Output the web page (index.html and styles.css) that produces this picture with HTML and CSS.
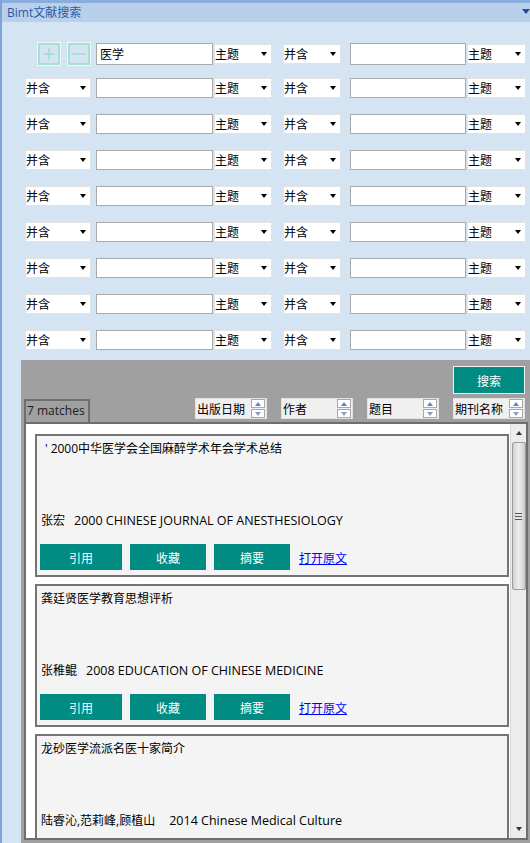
FILE: index.html
```html
<!DOCTYPE html>
<html lang="zh-CN">
<head>
<meta charset="utf-8">
<title>Bimt文献搜索</title>
<link rel="stylesheet" href="styles.css">
</head>
<body>
<div class="window">
  <div class="titlebar">
    <span class="title">Bimt文献搜索</span>
    <span class="tb-arrow"></span>
  </div>

  <div class="form">
    <div class="row first">
      <div class="c1 pm">
        <span class="pmbtn"><svg width="18" height="18" viewBox="0 0 18 18"><path d="M3.5 9H14.5M9 3.5V14.5" stroke="#a4e1d1" stroke-width="2" fill="none"/></svg></span>
        <span class="pmbtn"><svg width="18" height="18" viewBox="0 0 18 18"><path d="M2.5 9H15.5" stroke="#a4e1d1" stroke-width="2" fill="none"/></svg></span>
      </div>
      <div class="inp c2">医学</div>
      <div class="sel c3">主题</div>
      <div class="sel c4">并含</div>
      <div class="inp c5"></div>
      <div class="sel c6">主题</div>
    </div>
    <div class="row"><div class="sel c1">并含</div><div class="inp c2"></div><div class="sel c3">主题</div><div class="sel c4">并含</div><div class="inp c5"></div><div class="sel c6">主题</div></div>
    <div class="row"><div class="sel c1">并含</div><div class="inp c2"></div><div class="sel c3">主题</div><div class="sel c4">并含</div><div class="inp c5"></div><div class="sel c6">主题</div></div>
    <div class="row"><div class="sel c1">并含</div><div class="inp c2"></div><div class="sel c3">主题</div><div class="sel c4">并含</div><div class="inp c5"></div><div class="sel c6">主题</div></div>
    <div class="row"><div class="sel c1">并含</div><div class="inp c2"></div><div class="sel c3">主题</div><div class="sel c4">并含</div><div class="inp c5"></div><div class="sel c6">主题</div></div>
    <div class="row"><div class="sel c1">并含</div><div class="inp c2"></div><div class="sel c3">主题</div><div class="sel c4">并含</div><div class="inp c5"></div><div class="sel c6">主题</div></div>
    <div class="row"><div class="sel c1">并含</div><div class="inp c2"></div><div class="sel c3">主题</div><div class="sel c4">并含</div><div class="inp c5"></div><div class="sel c6">主题</div></div>
    <div class="row"><div class="sel c1">并含</div><div class="inp c2"></div><div class="sel c3">主题</div><div class="sel c4">并含</div><div class="inp c5"></div><div class="sel c6">主题</div></div>
    <div class="row"><div class="sel c1">并含</div><div class="inp c2"></div><div class="sel c3">主题</div><div class="sel c4">并含</div><div class="inp c5"></div><div class="sel c6">主题</div></div>
  </div>

  <div class="panel">
    <div class="search-row"><button class="search">搜索</button></div>
    <div class="sort-row">
      <div class="tab">7 matches</div>
      <div class="sorts">
        <div class="sort"><span>出版日期</span><span class="spin"><i class="up"></i><i class="dn"></i></span></div>
        <div class="sort"><span>作者</span><span class="spin"><i class="up"></i><i class="dn"></i></span></div>
        <div class="sort"><span>题目</span><span class="spin"><i class="up"></i><i class="dn"></i></span></div>
        <div class="sort"><span>期刊名称</span><span class="spin"><i class="up"></i><i class="dn"></i></span></div>
      </div>
    </div>
    <div class="list">
      <div class="cards">
        <div class="card">
          <div class="ctitle"><span class="quote">'</span>2000中华医学会全国麻醉学术年会学术总结</div>
          <div class="meta"><span>张宏</span><span class="src">2000 CHINESE JOURNAL OF ANESTHESIOLOGY</span></div>
          <div class="actions"><button class="btn wide">引用</button><button class="btn">收藏</button><button class="btn">摘要</button><a class="open" href="#">打开原文</a></div>
        </div>
        <div class="card">
          <div class="ctitle">龚廷贤医学教育思想评析</div>
          <div class="meta"><span>张稚鲲</span><span class="src">2008 EDUCATION OF CHINESE MEDICINE</span></div>
          <div class="actions"><button class="btn wide">引用</button><button class="btn">收藏</button><button class="btn">摘要</button><a class="open" href="#">打开原文</a></div>
        </div>
        <div class="card">
          <div class="ctitle">龙砂医学流派名医十家简介</div>
          <div class="meta"><span>陆睿沁,范莉峰,顾植山</span><span class="src far">2014 Chinese Medical Culture</span></div>
        </div>
      </div>
      <div class="scrollbar">
        <span class="sb-up"></span>
        <div class="thumb"><span class="grip"></span><span class="grip"></span><span class="grip"></span></div>
        <div class="track"></div>
        <span class="sb-down"></span>
      </div>
    </div>
  </div>
</div>
</body>
</html>
```

FILE: styles.css
```css
* { box-sizing: border-box; }
html, body { margin: 0; padding: 0; }
body {
  width: 530px;
  height: 843px;
  overflow: hidden;
  background: #d4e4f3;
  font-family: "Open Sans", "Noto Sans CJK SC", sans-serif;
  font-size: 12px;
  color: #000;
}
.window {
  height: 843px;
  border-left: 2px solid #7fa1d8;
  background: #d4e4f3;
  overflow: hidden;
}
.titlebar {
  height: 22px;
  border-top: 3px solid #8badde;
  background: #b9d0ea;
  display: flex;
  align-items: center;
  justify-content: space-between;
  padding: 1px 0 0 5px;
}
.title { color: #2a5aa8; font-size: 12px; line-height: 16px; }
.tb-arrow {
  width: 0; height: 0;
  border-left: 4px solid transparent;
  border-right: 4px solid transparent;
  border-top: 5px solid #1d4d99;
  margin-bottom: 3px;
}

/* search form */
.form {
  padding: 21px 0 0 23px;
  display: flex;
  flex-direction: column;
  gap: 16px;
}
.row { display: flex; height: 20px; align-items: stretch; }
.row.first { height: 22px; margin-bottom: -3px; }
.c1 { width: 66px; }
.c2 { width: 117px; margin-left: 5px; }
.c3 { width: 58px; margin-left: 1px; }
.c4 { width: 58px; margin-left: 11px; }
.c5 { width: 116px; margin-left: 9px; }
.c6 { width: 59px; margin-left: 1px; }

.sel {
  background: #fff;
  border: 1px solid #e3e3e3;
  height: 20px;
  display: flex;
  align-items: center;
  justify-content: space-between;
  padding: 0 4px 0 0;
  line-height: 18px;
  font-family: "Noto Sans CJK SC", sans-serif;
}
.sel::after {
  content: "";
  width: 0; height: 0;
  border-left: 3.5px solid transparent;
  border-right: 3.5px solid transparent;
  border-top: 4px solid #000;
}
.row.first .sel { align-self: center; }
.inp {
  background: #fff;
  border: 1px solid #a9a9a9;
  padding-left: 3px;
  line-height: 19px;
  font-family: "Noto Sans CJK SC", sans-serif;
}
.pm { display: flex; justify-content: flex-end; gap: 8px; padding-right: 1px; }
.pmbtn {
  width: 22px; height: 22px;
  border: 2px solid #a4e1d1;
  box-shadow: 0 0 0 1px #eef7f9;
  display: flex;
  align-items: center;
  justify-content: center;
}
.pmbtn svg { display: block; }

/* results panel */
.panel {
  margin: 10px 0 0 19px;
  height: 483px;
  background: #a0a0a0;
  padding: 6px 0 0 3px;
  display: flex;
  flex-direction: column;
}
.search-row { display: flex; justify-content: flex-end; padding-right: 5px; }
.search {
  width: 72px; height: 28px;
  background: #008b83;
  border: 1px solid #f2f2f2;
  color: #fff;
  font-family: "Noto Sans CJK SC", sans-serif;
  font-size: 12px;
  padding: 0;
}
.sort-row {
  margin-top: 4px;
  height: 24px;
  display: flex;
  justify-content: space-between;
  align-items: flex-start;
  padding-right: 5px;
}
.tab {
  margin-top: 1px;
  width: 66px; height: 23px;
  border: 2px solid #6e6e6e;
  border-bottom: none;
  padding-left: 1px;
  line-height: 19px;
  color: #1a1a1a;
}
.sorts { display: flex; gap: 14px; }
.sort {
  width: 72px; height: 21px;
  background: #f0f0f0;
  border: 1px solid #e2e2e2;
  display: flex;
  align-items: center;
  justify-content: space-between;
  padding: 0 1px;
  font-family: "Noto Sans CJK SC", sans-serif;
  line-height: 16px;
}
.spin {
  width: 14px; height: 19px;
  display: flex;
  flex-direction: column;
  gap: 1px;
}
.spin i {
  flex: 1;
  background: #fff;
  border: 1px solid #a8a8a8;
  display: flex;
  align-items: center;
  justify-content: center;
}
.spin i::after {
  content: "";
  width: 0; height: 0;
  border-left: 3.5px solid transparent;
  border-right: 3.5px solid transparent;
}
.spin .up::after { border-bottom: 4px solid #6a7fbf; }
.spin .dn::after { border-top: 4px solid #8a9acb; }

.list {
  height: 418px;
  margin-right: 2px;
  border: 2px solid #6e6e6e;
  background: #fff;
  display: flex;
}
.cards {
  flex: 1;
  padding: 10px 1px 0 9px;
  overflow: hidden;
  display: flex;
  flex-direction: column;
  gap: 7px;
}
.card {
  flex-shrink: 0;
  height: 143px;
  border: 2px solid #747474;
  background: #f4f4f4;
  padding: 5px 4px 5px 3px;
  display: flex;
  flex-direction: column;
}
.ctitle, .meta { padding-left: 1px; line-height: 16px; white-space: nowrap; }
.quote { margin: 0 3px 0 4px; }
.meta { margin-top: 56px; }
.src { margin-left: 9px; font-size: 12.5px; }
.src.far { margin-left: 14px; }
.actions { margin-top: 15px; display: flex; align-items: center; gap: 8px; }
.btn {
  width: 76px; height: 26px;
  background: #008b83;
  border: none;
  color: #fff;
  font-family: "Noto Sans CJK SC", sans-serif;
  font-size: 12px;
  padding: 0;
}
.btn.wide { width: 82px; }
.open {
  margin-left: 1px;
  color: #0000ff;
  text-decoration: underline;
  font-family: "Noto Sans CJK SC", sans-serif;
}

/* scrollbar */
.scrollbar {
  width: 16px;
  background: #ececec;
  border-left: 1px solid #dadada;
  display: flex;
  flex-direction: column;
  align-items: center;
  padding-top: 7px;
}
.sb-up, .sb-down {
  width: 0; height: 0;
  border-left: 3.5px solid transparent;
  border-right: 3.5px solid transparent;
  flex-shrink: 0;
}
.sb-up { border-bottom: 4px solid #333; }
.sb-down { border-top: 4px solid #333; margin-bottom: 7px; }
.thumb {
  margin-top: 7px;
  width: 14px; height: 148px;
  border: 1px solid #9c9c9c;
  border-radius: 2px;
  background: linear-gradient(to right, #d2d2d2, #ececec 45%, #e2e2e2 70%, #c8c8c8);
  display: flex;
  flex-direction: column;
  align-items: center;
  justify-content: center;
  gap: 2px;
}
.grip { width: 7px; height: 1px; background: #555; }
.track { flex: 1; }
```
